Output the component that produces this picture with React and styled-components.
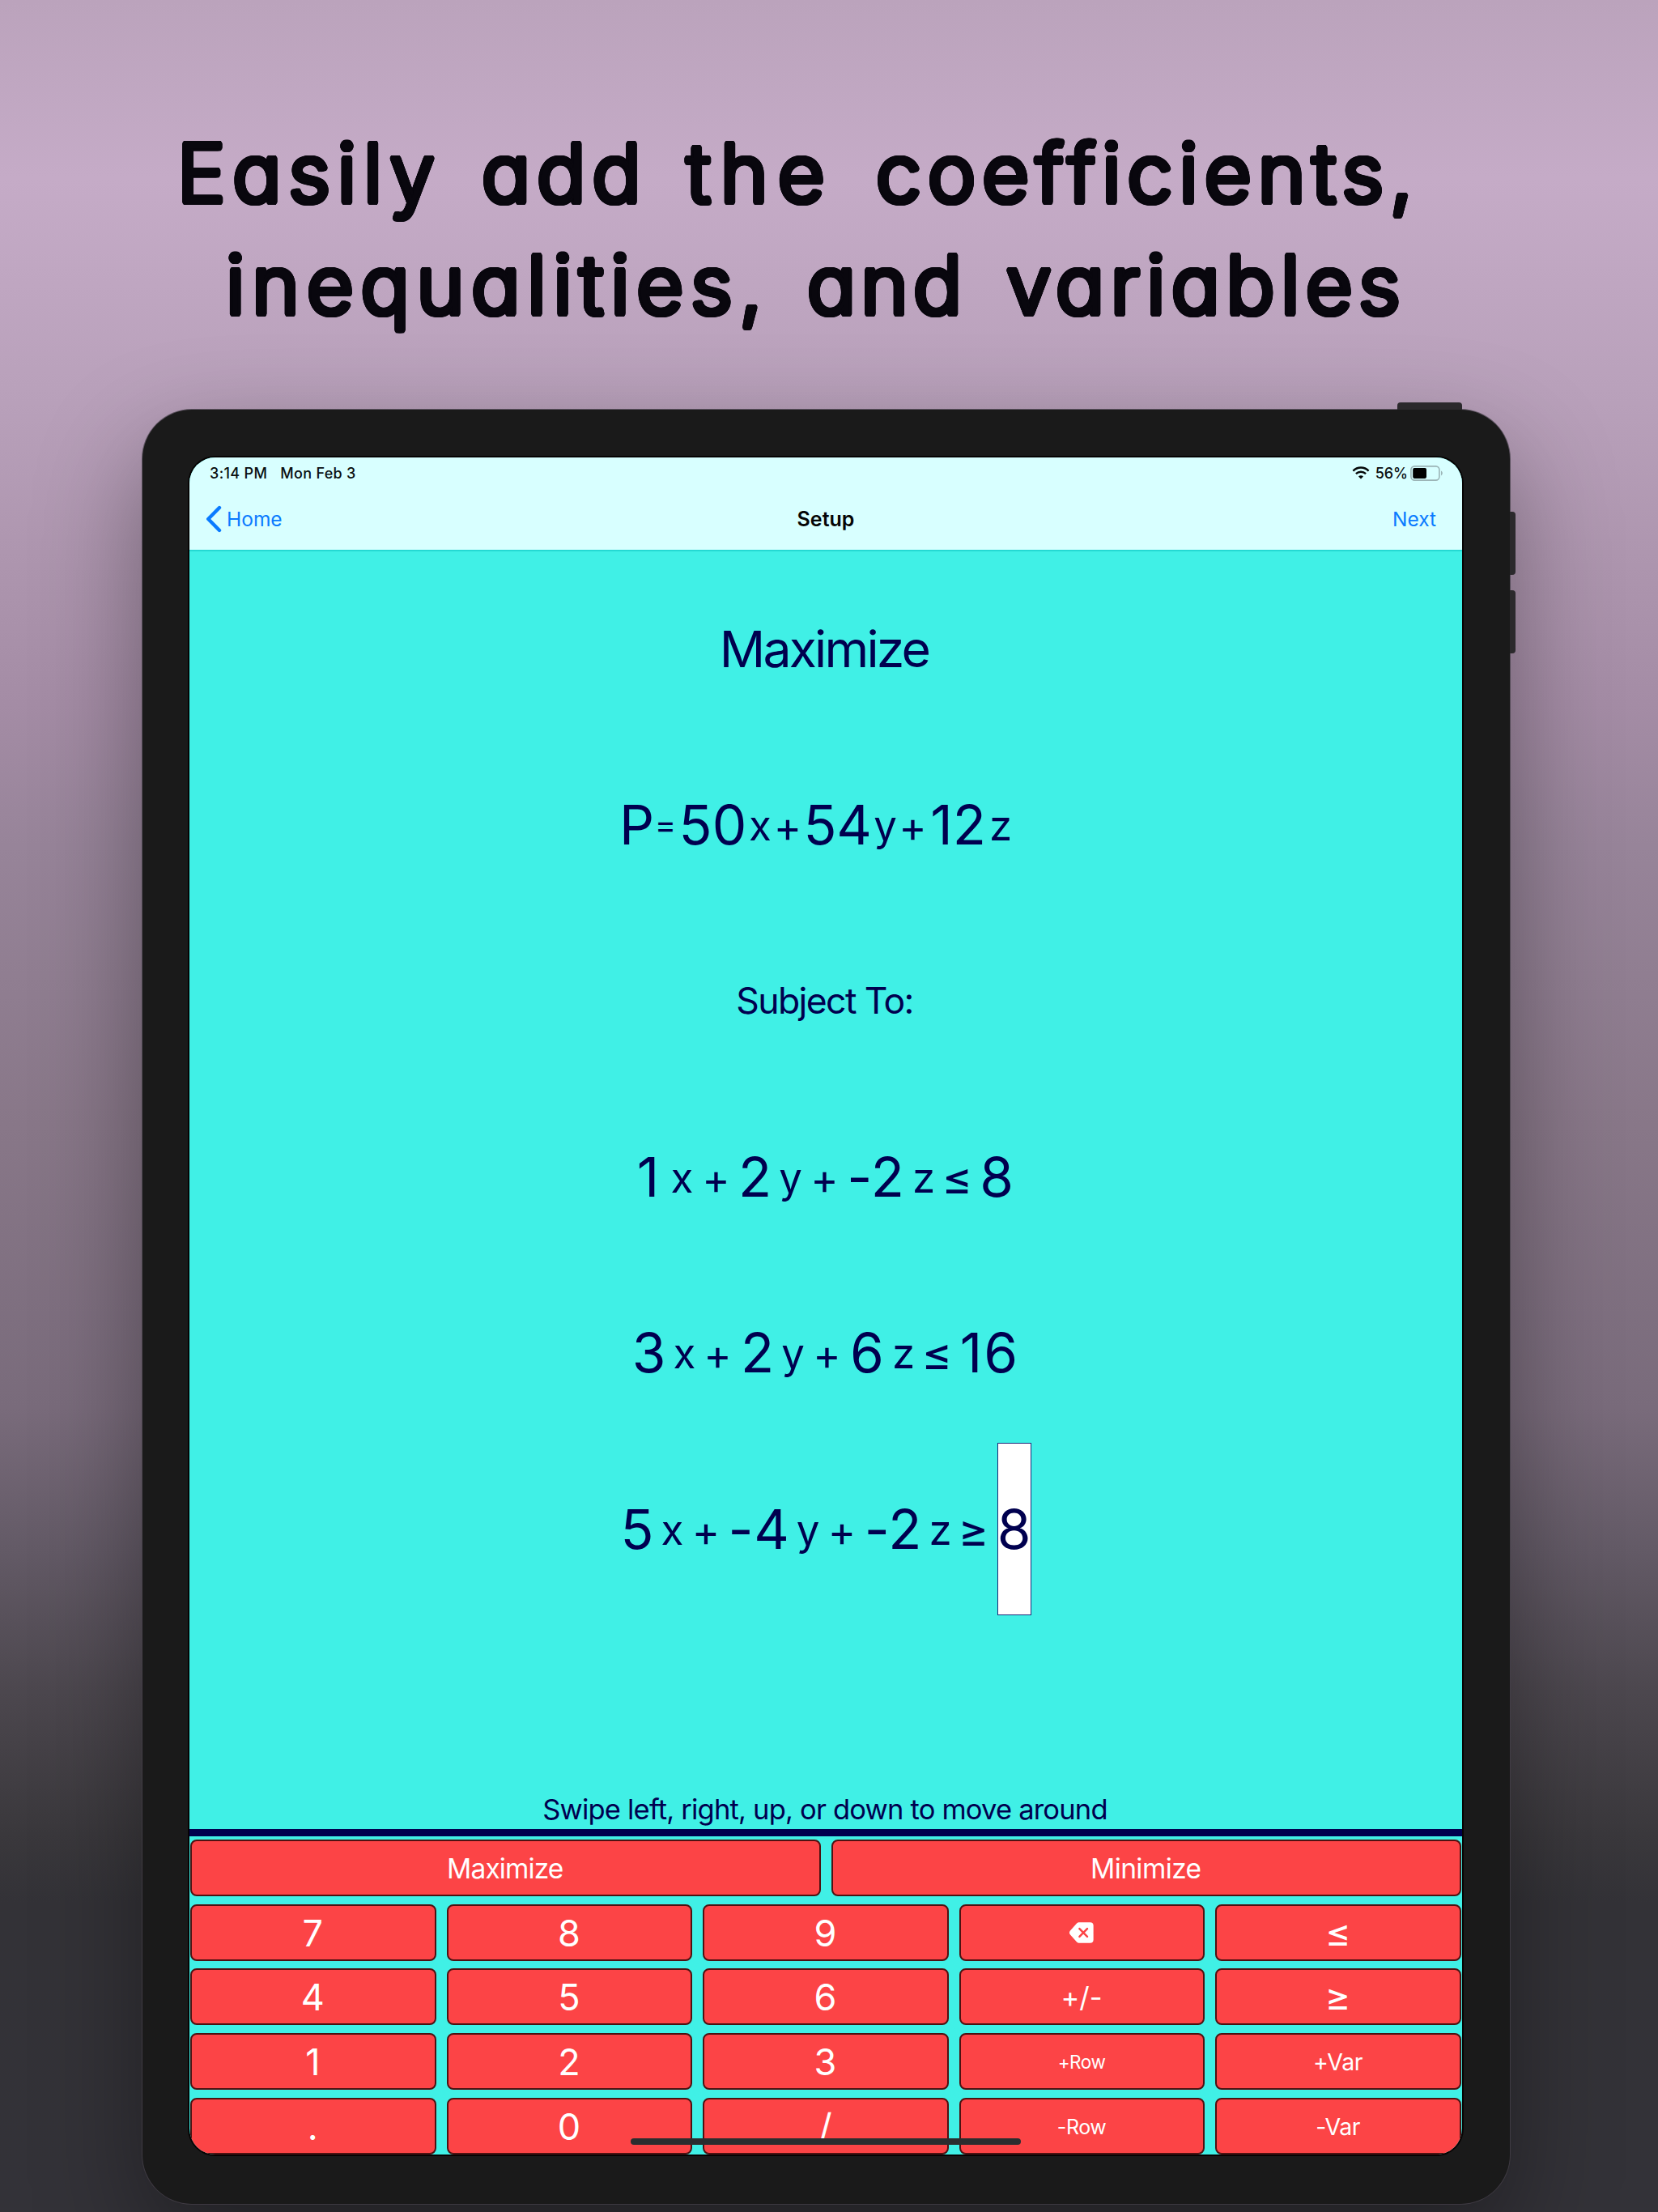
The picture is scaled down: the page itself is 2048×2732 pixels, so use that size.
import React from "react";
import styled, { createGlobalStyle } from "styled-components";

const GlobalStyle = createGlobalStyle`
  * { box-sizing: border-box; }
  html, body { margin: 0; padding: 0; }
  body { font-family: Inter, "Liberation Sans", sans-serif; }
`;

const NAVY = "#00004f";
const AQUA = "#40f0e6";
const RED = "#fc4446";

const roundedInk = (radius, color) =>
  Array.from({ length: 20 }, (_, i) => {
    const a = (i / 20) * Math.PI * 2;
    return `${(Math.cos(a) * radius).toFixed(2)}px ${(Math.sin(a) * radius).toFixed(2)}px 0 ${color}`;
  }).join(", ");

const Poster = styled.main`
  width: 2048px;
  height: 2732px;
  overflow: hidden;
  display: flex;
  flex-direction: column;
  background: linear-gradient(
    180deg,
    #bba3bc 0px,
    #c5abc7 220px,
    #b9a1bb 480px,
    #ad95ae 700px,
    #a48ca5 870px,
    #978499 1045px,
    #887788 1390px,
    #796b7b 1740px,
    #635a66 1915px,
    #4c474e 2090px,
    #3a383c 2265px,
    #333237 2350px,
    #333238 2732px
  );
`;

const Headline = styled.h1`
  height: 506px;
  margin: 0;
  padding-top: 145px;
  font-size: 100px;
  font-weight: 300;
  line-height: 138px;
  color: #09070e;
  font-feature-settings: "cv11" 1;
  text-shadow: ${roundedInk(3.4, "#09070e")};
`;

const HeadlineRow = styled.div`
  display: flex;
  padding-left: ${(p) => p.$indent}px;
`;

const Word = styled.span`
  flex: none;
  width: ${(p) => p.$w}px;
  letter-spacing: ${(p) => p.$ls}px;
  white-space: nowrap;
`;

const Device = styled.section`
  position: relative;
  width: 1689px;
  height: 2216px;
  margin-left: 176px;
  padding: 59px 58px 60px;
  border-radius: 61px;
  background: #1a1a1a;
  box-shadow: 0 0 0 1px rgba(70, 64, 74, 0.75), 0 50px 130px rgba(0, 0, 0, 0.36);
`;

const SideButton = styled.span`
  position: absolute;
  left: ${(p) => p.$x}px;
  top: ${(p) => p.$y}px;
  width: ${(p) => p.$w}px;
  height: ${(p) => p.$h}px;
  border-radius: ${(p) => p.$r};
  background: #2b292c;
`;

const Screen = styled.div`
  position: relative;
  width: 1572px;
  height: 2096px;
  border-radius: 32px;
  overflow: hidden;
  display: flex;
  flex-direction: column;
  background: ${AQUA};
  box-shadow: 0 0 0 2px #060303;
`;

const Header = styled.header`
  height: 116px;
  background: #d8ffff;
  border-bottom: 2px solid #25d9d3;
`;

const StatusBar = styled.div`
  height: 38px;
  padding: 0 23px 0 25px;
  display: flex;
  align-items: center;
  font-size: 18px;
  font-weight: 500;
  color: #0a0f10;
`;

const StatusText = styled.span`
  margin-right: ${(p) => p.$gap || 0}px;
  letter-spacing: ${(p) => p.$ls || 0}px;
  white-space: nowrap;
`;

const StatusGroup = styled.div`
  margin-left: auto;
  display: flex;
  align-items: center;
`;

const NavBar = styled.nav`
  height: 75px;
  padding: 0 32px 0 20px;
  display: grid;
  grid-template-columns: 1fr auto 1fr;
  align-items: center;
  font-size: 24.5px;
  color: #0a7bff;
`;

const BackLink = styled.span`
  display: flex;
  align-items: center;
  gap: 6px;
  letter-spacing: 0;
`;

const NavTitle = styled.span`
  margin-left: 12px;
  font-size: 25px;
  font-weight: 600;
  letter-spacing: 0;
  color: #050505;
`;

const NextLink = styled.span`
  justify-self: end;
  letter-spacing: 0;
`;

const Workspace = styled.div`
  height: 1578px;
  padding-top: 11px;
  display: flex;
  flex-direction: column;
  color: ${NAVY};
`;

const Line = styled.div`
  flex: none;
  height: 217.5px;
  display: flex;
  align-items: center;
  justify-content: center;
  padding-left: ${(p) => Math.max(p.$shift || 0, 0)}px;
  padding-right: ${(p) => Math.max(-(p.$shift || 0), 0)}px;
`;

const Caption = styled.span`
  font-size: ${(p) => p.$size}px;
  letter-spacing: ${(p) => p.$ls}px;
  white-space: nowrap;
`;

const Token = styled.span`
  flex: none;
  width: ${(p) => p.$w}px;
  margin-left: ${(p) => p.$gap || 0}px;
  padding-top: ${(p) => p.$drop || 0}px;
  display: flex;
  justify-content: center;
  white-space: nowrap;
  font-size: ${(p) => p.$size}px;
  letter-spacing: ${(p) => p.$ls || 0}px;
`;

const Selected = styled(Token)`
  height: 213px;
  align-items: center;
  background: #fff;
  border: 1.5px solid #1d2a78;
`;

const Hint = styled.p`
  margin: auto 0 3px;
  padding-right: 2px;
  text-align: center;
  font-size: 34.5px;
  line-height: 42px;
  letter-spacing: ${(p) => p.$ls}px;
`;

const Keypad = styled.div`
  border-top: 9px solid ${NAVY};
  padding: 4px 1px 0;
  display: flex;
  flex-direction: column;
  gap: 9.8px;
`;

const KeyRow = styled.div`
  display: grid;
  grid-template-columns: repeat(${(p) => p.$cols}, 1fr);
  column-gap: 13px;
`;

const Key = styled.button`
  height: 70px;
  margin: 0;
  padding: ${(p) => (p.$wide ? 3 : 1)}px 1px 0 0;
  display: flex;
  align-items: center;
  justify-content: center;
  border: 2px solid #4d1212;
  border-radius: 8px;
  background: ${RED};
  color: #fff;
  font-family: inherit;
  font-size: ${(p) => p.$size}px;
  font-weight: ${(p) => p.$weight || 400};
  letter-spacing: ${(p) => p.$ls || 0}px;
`;

const HomeIndicator = styled.span`
  position: absolute;
  left: 545px;
  bottom: 12px;
  width: 482px;
  height: 8px;
  border-radius: 4px;
  background: #2b2d2f;
`;

const Chevron = () => (
  <svg width="20" height="34" viewBox="0 0 20 34" fill="none">
    <path d="M17 3 L3.2 17 L17 31" stroke="#0a7bff" strokeWidth="4.4" strokeLinecap="round" strokeLinejoin="round" />
  </svg>
);

const WifiMark = styled.svg`
  margin-right: 7px;
`;

const Wifi = () => (
  <WifiMark width="22" height="16" viewBox="0 0 22 16" fill="none" stroke="#050808">
    <path d="M1.4 5.6 C6.8 0.2 15.2 0.2 20.6 5.6" strokeWidth="2.5" />
    <path d="M4.9 9.2 C8.4 5.9 13.6 5.9 17.1 9.2" strokeWidth="2.4" />
    <path d="M11 15.4 L8 12.4 C9.7 10.8 12.3 10.8 14 12.4 Z" fill="#050808" stroke="none" />
  </WifiMark>
);

const Battery = () => (
  <svg width="41" height="19" viewBox="0 0 41 19" fill="none">
    <rect x="0.9" y="0.9" width="35" height="17.2" rx="4.4" stroke="#9bb4b6" strokeWidth="1.6" />
    <rect x="3.2" y="3.1" width="16.8" height="12.8" rx="1.8" fill="#000" />
    <path d="M38 6.6 C40.4 7.6 40.4 11.4 38 12.4 Z" fill="#9bb4b6" />
  </svg>
);

const Backspace = () => (
  <svg width="30" height="26" viewBox="0 0 30 26">
    <path
      d="M12.6 0.3 H25.6 C28.2 0.3 29.6 1.7 29.6 4.2 V21.8 C29.6 24.3 28.2 25.7 25.6 25.7 H12.6 C11 25.7 9.9 25.3 8.8 24.2 L1 15.6 C-0.4 14 -0.4 12 1 10.4 L8.8 1.8 C9.9 0.7 11 0.3 12.6 0.3 Z"
      fill="#fff"
    />
    <path d="M12.4 8.2 L22 17.8 M22 8.2 L12.4 17.8" stroke={RED} strokeWidth="2.5" strokeLinecap="round" />
  </svg>
);

const N = 67.5;
const V = 51;
const OP = 52;
const REL = 57;

const dropFor = (text) => {
  if (text === "+") return 6;
  if (text === "≤" || text === "≥") return 4;
  if (["x", "y", "z"].includes(text)) return 2;
  return 0;
};

const equations = [
  {
    shift: -24,
    tokens: [
      ["P", 34, 0, N],
      ["=", 21, 8, 40],
      ["50", 78, 9, N, 0.3],
      ["x", 23, 8, V],
      ["+", 27, 9, OP],
      ["54", 76, 10, N, -0.3],
      ["y", 26, 8, V],
      ["+", 26, 8, OP],
      ["12", 64, 11, N],
      ["z", 21, 10, V],
    ],
  },
  {
    tokens: [
      ["1", 19, 0, N],
      ["x", 23, 21, V],
      ["+", 27, 17, OP],
      ["2", 33, 18, N],
      ["y", 25, 15, V],
      ["+", 27, 16, OP],
      ["-2", 62, 19, N, 0.8],
      ["z", 22, 17, V],
      ["≤", 28, 16, REL],
      ["8", 36, 17, N],
    ],
  },
  {
    tokens: [
      ["3", 35, 0, N],
      ["x", 23, 15, V],
      ["+", 27, 16, OP],
      ["2", 33, 19, N],
      ["y", 25, 15, V],
      ["+", 27, 16, OP],
      ["6", 36, 18, N],
      ["z", 22, 16, V],
      ["≤", 28, 16, REL],
      ["16", 67, 18, N, 2],
    ],
  },
  {
    shift: 3,
    tokens: [
      ["5", 35, 0, N],
      ["x", 24, 14, V],
      ["+", 27, 16, OP],
      ["-4", 66, 19, N, 0.8],
      ["y", 25, 15, V],
      ["+", 27, 16, OP],
      ["-2", 62, 19, N, 0.8],
      ["z", 22, 16, V],
      ["≥", 28, 16, REL],
      ["8", 42, 15, N, 0, true],
    ],
  },
];

const Equation = ({ shift, tokens }) => (
  <Line $shift={shift}>
    {tokens.map(([text, w, gap, size, ls, selected], i) => {
      const Cell = selected ? Selected : Token;
      return (
        <Cell key={i} $w={w} $gap={gap} $size={size} $ls={ls} $drop={dropFor(text)}>
          {text}
        </Cell>
      );
    })}
  </Line>
);

const keyRows = [
  [["Maximize", 33.5, 400, -0.9], ["Minimize", 33.5, 400, -0.6]],
  [["7", 45], ["8", 45], ["9", 45], ["backspace", 30], ["≤", 48]],
  [["4", 45], ["5", 45], ["6", 45], ["+/-", 34.5], ["≥", 48]],
  [["1", 45], ["2", 45], ["3", 45], ["+Row", 22.5, 400, -0.4], ["+Var", 28.5, 400, -0.3]],
  [[".", 45], ["0", 45], ["/", 45], ["-Row", 25, 400, -0.4], ["-Var", 28.5, 400, -0.4]],
];

export default function App() {
  return (
    <>
      <GlobalStyle />
      <Poster>
        <Headline>
          <HeadlineRow $indent={219}>
            <Word $w={376} $ls={8.8}>Easily</Word>
            <Word $w={253} $ls={8}>add</Word>
            <Word $w={234} $ls={12}>the</Word>
            <Word $w={665} $ls={8}>coefficients,</Word>
          </HeadlineRow>
          <HeadlineRow $indent={279}>
            <Word $w={718} $ls={8.8}>inequalities,</Word>
            <Word $w={246} $ls={6}>and</Word>
            <Word $w={520} $ls={7.4}>variables</Word>
          </HeadlineRow>
        </Headline>
        <Device>
          <SideButton $x={1550} $y={-9} $w={80} $h={9} $r="4px 4px 0 0" />
          <SideButton $x={1689} $y={126} $w={7} $h={78} $r="0 4px 4px 0" />
          <SideButton $x={1689} $y={223} $w={7} $h={78} $r="0 4px 4px 0" />
          <Screen>
            <Header>
              <StatusBar>
                <StatusText $gap={16} $ls={0.35}>3:14 PM</StatusText>
                <StatusText $ls={0.3}>Mon Feb 3</StatusText>
                <StatusGroup>
                  <Wifi />
                  <StatusText $gap={3}>56%</StatusText>
                  <Battery />
                </StatusGroup>
              </StatusBar>
              <NavBar>
                <BackLink>
                  <Chevron />
                  Home
                </BackLink>
                <NavTitle>Setup</NavTitle>
                <NextLink>Next</NextLink>
              </NavBar>
            </Header>
            <Workspace>
              <Line $shift={-4}>
                <Caption $size={62.5} $ls={-2.8}>Maximize</Caption>
              </Line>
              <Equation {...equations[0]} />
              <Line $shift={-3}>
                <Caption $size={44.5} $ls={-1.6}>Subject To:</Caption>
              </Line>
              {equations.slice(1).map((eq, i) => (
                <Equation key={i} {...eq} />
              ))}
              <Hint $ls={-0.8}>Swipe left, right, up, or down to move around</Hint>
            </Workspace>
            <Keypad>
              {keyRows.map((row, i) => (
                <KeyRow key={i} $cols={row.length}>
                  {row.map(([label, size, weight, ls]) => (
                    <Key key={label} $size={size} $weight={weight} $ls={ls} $wide={row.length === 2}>
                      {label === "backspace" ? <Backspace /> : label}
                    </Key>
                  ))}
                </KeyRow>
              ))}
            </Keypad>
            <HomeIndicator />
          </Screen>
        </Device>
      </Poster>
    </>
  );
}
